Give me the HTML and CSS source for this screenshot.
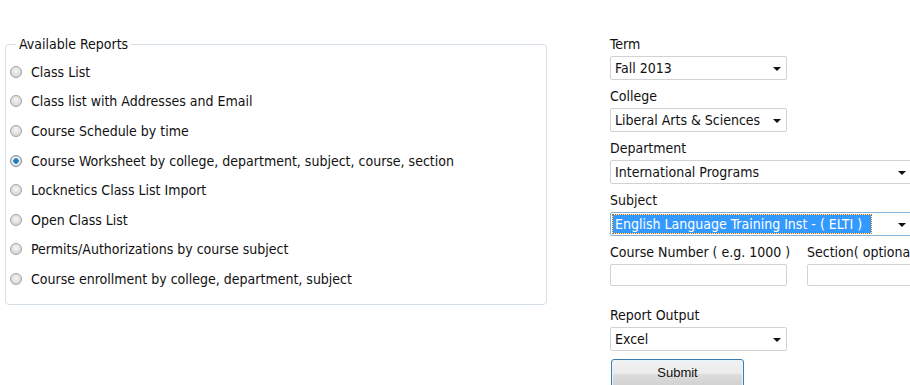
FILE: index.html
```html
<!DOCTYPE html>
<html>
<head>
<meta charset="utf-8">
<link rel="stylesheet" href="styles.css">
</head>
<body>
<div class="page">
  <fieldset class="reports">
    <legend>Available Reports</legend>
    <label class="opt"><input type="radio" name="r"><span>Class List</span></label>
    <label class="opt"><input type="radio" name="r"><span>Class list with Addresses and Email</span></label>
    <label class="opt"><input type="radio" name="r"><span>Course Schedule by time</span></label>
    <label class="opt"><input type="radio" name="r" checked><span>Course Worksheet by college, department, subject, course, section</span></label>
    <label class="opt"><input type="radio" name="r"><span>Locknetics Class List Import</span></label>
    <label class="opt"><input type="radio" name="r"><span>Open Class List</span></label>
    <label class="opt"><input type="radio" name="r"><span>Permits/Authorizations by course subject</span></label>
    <label class="opt"><input type="radio" name="r"><span>Course enrollment by college, department, subject</span></label>
  </fieldset>

  <div class="filters">
    <div class="field">
      <div class="lbl">Term</div>
      <div class="select"><span class="val">Fall 2013</span><i class="arrow"></i></div>
    </div>
    <div class="field">
      <div class="lbl">College</div>
      <div class="select"><span class="val">Liberal Arts &amp; Sciences</span><i class="arrow"></i></div>
    </div>
    <div class="field">
      <div class="lbl">Department</div>
      <div class="select wide"><span class="val">International Programs</span><i class="arrow"></i></div>
    </div>
    <div class="field">
      <div class="lbl">Subject</div>
      <div class="select wide focused"><span class="val hl">English Language Training Inst - ( ELTI )</span><i class="arrow"></i></div>
    </div>
    <div class="row">
      <div class="field">
        <div class="lbl">Course Number ( e.g. 1000 )</div>
        <input class="text" type="text">
      </div>
      <div class="field">
        <div class="lbl">Section( optional )</div>
        <input class="text" type="text">
      </div>
    </div>
    <div class="field output">
      <div class="lbl">Report Output</div>
      <div class="select"><span class="val">Excel</span><i class="arrow"></i></div>
    </div>
    <button class="submit" type="button">Submit</button>
  </div>
</div>
</body>
</html>
```
FILE: styles.css
```css
html, body {
  margin: 0;
  padding: 0;
  background: #fff;
  overflow: hidden;
}
body {
  font-family: "DejaVu Sans Condensed", "DejaVu Sans", sans-serif;
  font-size: 14px;
  color: #111;
  width: 910px;
  height: 385px;
}
.page {
  display: flex;
  align-items: flex-start;
  padding: 36px 0 0 5px;
  gap: 63px;
  white-space: nowrap;
}
.reports {
  width: 542px;
  box-sizing: border-box;
  margin: 0;
  border: 1px solid #d5dfe7;
  border-radius: 4px;
  padding: 5px 4px 10px 4px;
  flex: none;
}
.reports legend {
  padding: 0 3px;
  margin-left: 6px;
  line-height: 16px;
}
.opt {
  display: flex;
  align-items: center;
  height: 29.6px;
}
.opt input {
  appearance: none;
  -webkit-appearance: none;
  width: 12px;
  height: 12px;
  margin: 0 9px 0 0;
  border-radius: 50%;
  border: 1px solid #a4a4a4;
  box-sizing: border-box;
  background: radial-gradient(circle at 50% 40%, #f6f6f6 0, #dcdcdc 60%, #c8c8c8 100%);
  flex: none;
}
.opt input:checked {
  border-color: #7d8b96;
  background: radial-gradient(circle, #1a6fb0 0, #2e86c8 2.5px, #e8eef2 3px, #cfd6dc 100%);
}
.filters {
  display: flex;
  flex-direction: column;
  width: 300px;
}
.field {
  display: flex;
  flex-direction: column;
  margin-bottom: 8px;
}
.lbl {
  line-height: 16px;
  margin-bottom: 4px;
}
.select {
  position: relative;
  box-sizing: border-box;
  width: 177px;
  height: 24px;
  border: 1px solid #d2d2d2;
  border-radius: 2px;
  display: flex;
  align-items: center;
  padding-left: 4px;
  background: #fff;
}
.select.wide {
  width: 302px;
}
.select.focused {
  border-color: #86b3dc;
  padding-left: 2px;
}
.val {
  line-height: 16px;
}
.val.hl {
  background: #3399ff;
  color: #fff;
  outline: 1px dotted #c06a00;
  width: 258px;
  padding: 1px 0 1px 2px;
  box-sizing: border-box;
}
.arrow {
  position: absolute;
  right: 5px;
  top: 10px;
  width: 0;
  height: 0;
  border-left: 4px solid transparent;
  border-right: 4px solid transparent;
  border-top: 4px solid #111;
}
.row {
  display: flex;
  gap: 20px;
}
.row .field {
  width: 177px;
  margin-bottom: 21px;
}
.text {
  box-sizing: border-box;
  width: 177px;
  height: 22px;
  border: 1px solid #d2d2d2;
  border-radius: 2px;
  margin: 0;
  padding: 0 4px;
  font: inherit;
}
.output {
  margin-bottom: 8px;
}
.submit {
  width: 133px;
  height: 30px;
  margin-left: 1px;
  border: 1px solid #3c7fb1;
  border-radius: 3px;
  background: linear-gradient(#f2f2f2 0%, #ebebeb 50%, #dddddd 51%, #cfcfcf 100%);
  font-family: "Liberation Sans", Arial, sans-serif;
  font-size: 13px;
  color: #111;
  padding: 0 0 3px;
  box-shadow: inset 0 0 0 1px #e8f4fb;
}
```
